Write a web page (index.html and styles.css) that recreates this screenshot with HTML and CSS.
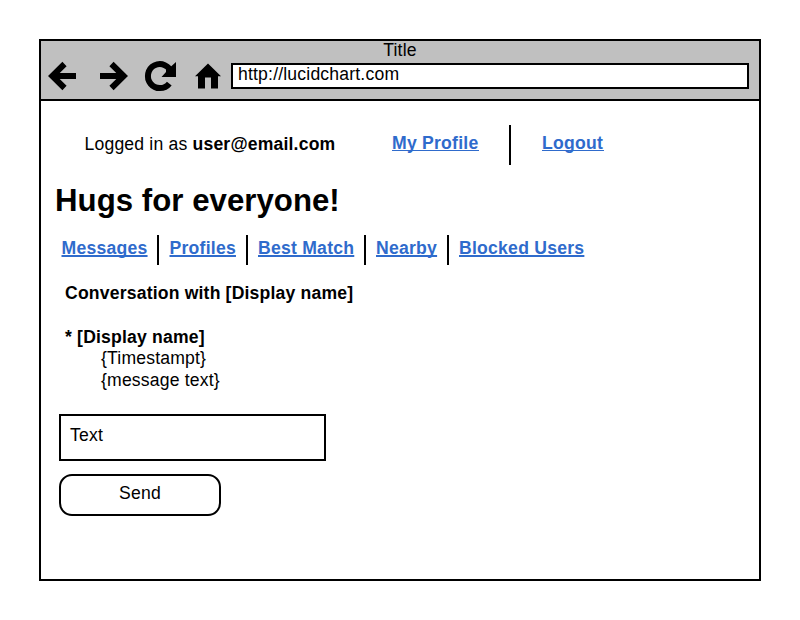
FILE: index.html
```html
<!DOCTYPE html>
<html lang="en">
<head>
<meta charset="utf-8">
<title>Title</title>
<link rel="stylesheet" href="styles.css">
</head>
<body>
<div class="window">
  <header class="chrome">
    <div class="title">Title</div>
    <div class="toolbar">
      <svg class="icons" width="190" height="36" viewBox="41 58 190 36">
        <g fill="none" stroke="#000" stroke-width="6">
          <path d="M76 76H53M64.500 64L52.300 76L64.500 88"/>
          <path d="M100 76H123M111.500 64L123.700 76L111.500 88"/>
          <path d="M169.300 83.600A12 12 0 1 1 171.500 73"/>
        </g>
        <path d="M176 62V77H161.500L166 72L166 69L171 66.500Z"/>
        <path d="M208 63.500L221 76.300H218V88.500H211V77.500H205V88.500H198V76.300H195Z"/>
      </svg>
      <div class="address">http://lucidchart.com</div>
    </div>
  </header>
  <main>
    <div class="account">
      <span class="user">Logged in as <b>user@email.com</b></span>
      <a class="profile">My Profile</a>
      <i class="rule"></i>
      <a class="logout">Logout</a>
    </div>
    <h1>Hugs for everyone!</h1>
    <nav>
      <a class="messages">Messages</a>
      <a class="profiles">Profiles</a>
      <a class="match">Best Match</a>
      <a class="nearby">Nearby</a>
      <a class="blocked">Blocked Users</a>
    </nav>
    <section class="conversation">
      <h2>Conversation with [Display name]</h2>
      <div class="sender">* [Display name]</div>
      <div class="detail">{Timestampt}</div>
      <div class="detail">{message text}</div>
    </section>
    <div class="field">Text</div>
    <button>Send</button>
  </main>
</div>
</body>
</html>
```
FILE: styles.css
```css
* { box-sizing: border-box; }
body {
  margin: 0;
  padding: 39px;
  background: #fff;
  color: #000;
  font: 17.600px/20px "Liberation Sans", Arial, sans-serif;
  letter-spacing: 0.180px;
}
.window { width: 722px; height: 542px; border: 2px solid #000; }
.chrome { height: 60px; background: #c0c0c0; border-bottom: 2px solid #000; }
.title { height: 22px; text-align: center; line-height: 18px; }
.toolbar { display: flex; }
.icons { display: block; margin-top: -5px; }
.address {
  width: 518px;
  height: 26px;
  border: 2px solid #000;
  background: #fff;
  padding-left: 5px;
  line-height: 18px;
}
main { padding: 24px 0 0 14px; }
a { color: #2f6bcc; font-weight: bold; letter-spacing: 0.240px; }
.account { display: flex; height: 40px; }
.user { width: 308px; padding: 9px 0 0 29.500px; }
.account a { height: 18px; margin-top: 8px; border-bottom: 1px solid #2f6bcc; }
.profile { width: 87px; margin-left: 29px; }
.rule { width: 2px; background: #000; margin: 0 31px 0 30px; }
.logout { width: 62px; }
h1 { margin: 18px 0 0; height: 52px; font-size: 31.200px; line-height: 36px; letter-spacing: 0.030px; }
nav { display: flex; height: 30px; margin-left: 6px; }
nav a {
  padding-top: 3px;
  height: 30px;
  border-right: 2px solid #000;
  text-decoration: underline;
  text-decoration-thickness: 2px;
  text-underline-offset: 1px;
  text-decoration-skip-ink: none;
}
.messages { width: 98px; padding-left: 0.500px; }
.profiles { width: 89px; padding-left: 10.500px; }
.match { width: 118px; padding-left: 10px; }
.nearby { width: 83px; padding-left: 10px; }
.blocked { padding-left: 10px; border: 0; }
.conversation { margin: 18px 0 0 10px; line-height: 21.6px; }
h2 { margin: 0 0 22px; font-size: inherit; }
.sender { font-weight: bold; }
.detail { padding-left: 36px; }
.field {
  width: 267px;
  height: 47px;
  margin: 22.600px 0 0 4px;
  padding: 9px;
  border: 2px solid #000;
}
button {
  display: block;
  width: 162px;
  height: 42px;
  margin: 13px 0 0 4px;
  padding: 0 0 4px;
  border: 2px solid #000;
  border-radius: 13px;
  background: #fff;
  color: #000;
  font: inherit;
  letter-spacing: inherit;
}
```
